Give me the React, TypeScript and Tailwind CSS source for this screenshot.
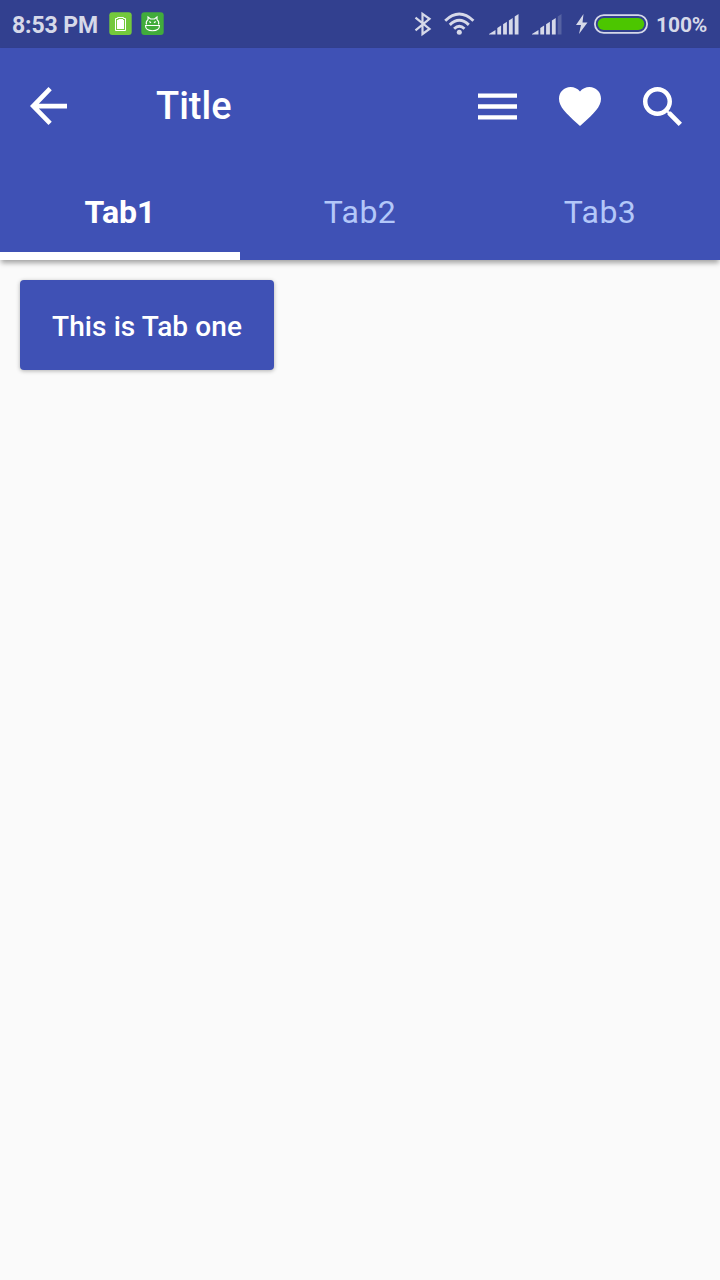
import React from "react";

function Notifications() {
  return (
    <div className="-mt-px ml-[10.5px] flex items-center gap-[9px]">
      <svg className="h-[23px] w-[23px]" viewBox="0 0 23 23">
        <rect x="0.300" y="0.300" width="22.400" height="22.600" rx="3" fill="#74c93c" />
        <path d="M8.500 5.500H14.500V6.500H16.500V18.500H6.500V6.500H8.500Z" fill="none" stroke="#fff" strokeWidth="1" />
        <path d="M9.500 7H14V8H15V17H8V8H9.500Z" fill="#fff" />
      </svg>
      <svg className="h-[23px] w-[23px]" viewBox="0 0 23 23">
        <rect x="0.300" y="0.300" width="22.400" height="22.600" rx="3" fill="#41ac3b" />
        <g fill="none" stroke="#fff" strokeWidth="1.1">
          <path d="M5.500 12.500C4.700 10.500 5.500 9 7 7.700V5L9.500 7H13.500L16 5V7.700C17.500 9 18.300 10.500 17.500 12.500" />
          <path d="M4.500 13.500C4.500 17 7.500 18.700 11.500 18.700S18.500 17 18.500 13.500Z" />
          <path d="M8.300 9.500L10 10.700M14.700 9.500L13 10.700" strokeWidth="1.300" />
        </g>
      </svg>
    </div>
  );
}

function Bluetooth() {
  return (
    <svg className="h-12 w-[18px]" viewBox="0 0 18 48" fill="none" stroke="#d6d9e9" strokeWidth="2.2">
      <path d="M1.500 17.700L15.500 29L8.500 34V13.800L15.500 18.800L1.500 30.300" />
    </svg>
  );
}

function Wifi() {
  return (
    <svg className="ml-3 h-12 w-8" viewBox="0 0 32 48" fill="none" stroke="#d6d9e9" strokeWidth="2.9">
      <path d="M1.200 20.700Q15.300 7.500 29.400 20.700" />
      <path d="M5.800 24.900Q15.300 15.700 24.800 24.900" />
      <path d="M10.100 28.700Q15.300 23.900 20.500 28.700" />
      <circle cx="15.300" cy="32.200" r="2.500" fill="#d6d9e9" stroke="none" />
    </svg>
  );
}

function Signal({ faded = false }: { faded?: boolean }) {
  return (
    <svg className="h-12 w-[31px]" viewBox="0.500 0 31 48" fill="#d6d9e9">
      <path d="M0.500 34.600V34L7 30V34.600Z" />
      <path d="M8.800 28.100L12.600 25.600V34.600H8.800Z" />
      <path d="M14.600 24.300L18.400 21.800V34.600H14.600Z" />
      <path d="M20.400 20.500L24.200 18V34.600H20.400Z" />
      <path d="M26.200 16.600L30 14.100V34.600H26.200Z" fillOpacity={faded ? 0.22 : 1} />
    </svg>
  );
}

function StatusBar() {
  return (
    <div className="flex h-12 items-center bg-[#32408f] pl-3 text-[#d6d9e9]">
      <span className="w-[86px] whitespace-nowrap pt-0.5 text-[23px] font-bold leading-[27px] tracking-[-0.1px]">8:53 PM</span>
      <Notifications />
      <div className="ml-auto flex items-center pr-3">
        <Bluetooth />
        <Wifi />
        <div className="ml-[13px] flex gap-3">
          <Signal />
          <Signal faded />
        </div>
        <svg className="ml-[13px] h-12 w-3" viewBox="0 0 12 48" fill="#d6d9e9">
          <path d="M7.500 14L0 25H5L3 34L11.500 22.500H6.500Z" />
        </svg>
        <svg className="ml-[6px] h-12 w-[54px]" viewBox="0 0 54 48">
          <rect x="0.900" y="15.100" width="52.200" height="17.800" rx="8.900" fill="none" stroke="#d6d9e9" strokeWidth="1.800" />
          <rect x="3.700" y="18" width="46.600" height="12" rx="6" fill="#4cc600" />
        </svg>
        <span className="ml-2 w-[52px] whitespace-nowrap pt-0.5 text-[21px] font-bold leading-[26px] tracking-[-0.1px]">100%</span>
      </div>
    </div>
  );
}

function Toolbar() {
  return (
    <div className="flex h-[116px] items-center pl-[30px] pr-[38px] text-white">
      <button aria-label="Back">
        <svg className="h-[38px] w-[37px]" viewBox="4 4 16 16" preserveAspectRatio="none" fill="currentColor">
          <path d="M20 11H7.830l5.590-5.590L12 4l-8 8 8 8 1.410-1.410L7.830 13H20v-2z" />
        </svg>
      </button>
      <h1 className="ml-[89px] text-[38px] font-medium leading-[44px]">Title</h1>
      <div className="ml-auto flex items-center">
        <button aria-label="Menu">
          <svg className="h-[39px] w-[39px]" viewBox="3 3 18 18" fill="currentColor">
            <path d="M3 18h18v-2H3v2zm0-5h18v-2H3v2zm0-7v2h18V6H3z" />
          </svg>
        </button>
        <button aria-label="Favorite" className="ml-[42px]">
          <svg className="h-[39px] w-[42px]" viewBox="2 3 20 18.350" preserveAspectRatio="none" fill="currentColor">
            <path d="m12 21.350-1.450-1.320C5.400 15.360 2 12.280 2 8.500 2 5.420 4.420 3 7.500 3c1.740 0 3.410.810 4.500 2.090C13.090 3.810 14.760 3 16.500 3 19.580 3 22 5.420 22 8.500c0 3.780-3.400 6.860-8.550 11.540L12 21.350z" />
          </svg>
        </button>
        <button aria-label="Search" className="ml-[42px]">
          <svg className="h-[39px] w-[39px]" viewBox="3 3 17.490 17.490" fill="currentColor">
            <path d="M15.500 14h-.790l-.280-.270C15.410 12.590 16 11.110 16 9.500 16 5.910 13.090 3 9.500 3S3 5.910 3 9.500 5.910 16 9.500 16c1.610 0 3.090-.590 4.230-1.570l.270.280v.790l5 4.990L20.490 19l-4.990-5zm-6 0C7.010 14 5 11.990 5 9.500S7.010 5 9.500 5 14 7.010 14 9.500 11.990 14 9.500 14z" />
          </svg>
        </button>
      </div>
    </div>
  );
}

function Tabs() {
  return (
    <div className="grid h-24 grid-cols-3 text-[32px] leading-[38px] text-[#b3c7f9]">
      <button className="border-b-8 border-white pt-2 font-bold text-white">Tab1</button>
      <button className="border-b-8 border-transparent pt-2 tracking-[0.4px]">Tab2</button>
      <button className="border-b-8 border-transparent pt-2 tracking-[0.4px]">Tab3</button>
    </div>
  );
}

export default function App() {
  return (
    <div className="flex h-[1280px] w-[720px] flex-col overflow-hidden bg-[#fafafa] font-['Roboto',sans-serif]">
      <StatusBar />
      <header className="bg-[#3f51b5] shadow-[0_4px_5px_-1px_rgba(0,0,0,0.35)]">
        <Toolbar />
        <Tabs />
      </header>
      <main className="flex-1 p-5">
        <button className="flex h-[90px] w-[254px] items-center justify-center rounded-[4px] bg-[#3f51b5] pt-1 text-[28px] font-medium leading-[34px] tracking-[0.1px] text-white shadow-[0_1px_4px_rgba(0,0,0,0.3)]">
          This is Tab one
        </button>
      </main>
    </div>
  );
}
